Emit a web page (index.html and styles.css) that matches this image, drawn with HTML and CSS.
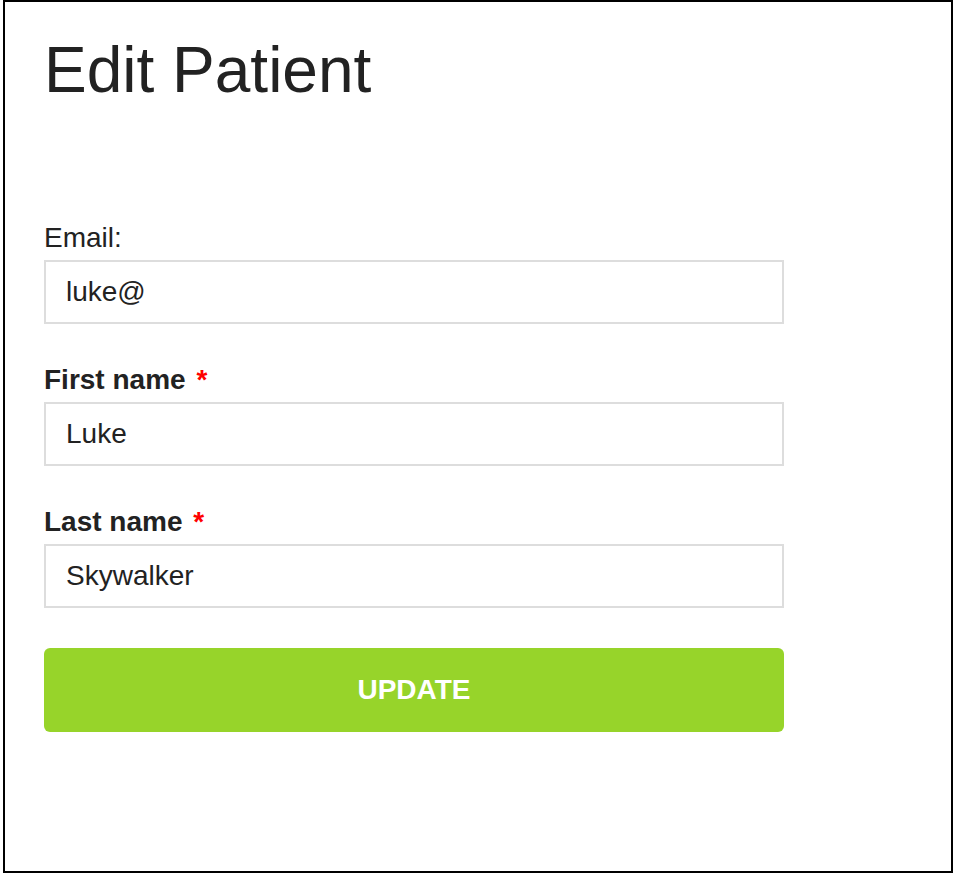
FILE: index.html
```html
<!DOCTYPE html>
<html lang="en">
<head>
<meta charset="utf-8">
<title>Edit Patient</title>
<link rel="stylesheet" href="styles.css">
</head>
<body>
<div class="frame">
  <h1 class="title">Edit Patient</h1>
  <form class="form">
    <div class="field">
      <label class="label" for="email">Email:</label>
      <input class="input" id="email" type="text" value="luke@">
    </div>
    <div class="field">
      <label class="label label-strong" for="first">First name <span class="req">*</span></label>
      <input class="input" id="first" type="text" value="Luke">
    </div>
    <div class="field">
      <label class="label label-strong" for="last">Last name <span class="req">*</span></label>
      <input class="input" id="last" type="text" value="Skywalker">
    </div>
    <button class="btn" type="button">UPDATE</button>
  </form>
</div>
</body>
</html>
```

FILE: styles.css
```css
html, body {
  margin: 0;
  padding: 0;
  background: #fff;
}

body {
  font-family: "Liberation Sans", Arial, Helvetica, sans-serif;
  color: #222;
}

.frame {
  box-sizing: border-box;
  width: 950px;
  height: 873px;
  margin-left: 3px;
  border: 2px solid #000;
  padding: 36px 0 0 39px;
}

.title {
  margin: 0;
  font-size: 64px;
  line-height: 64px;
  font-weight: 400;
  color: #222;
}

.form {
  margin-top: 121px;
  width: 740px;
  display: flex;
  flex-direction: column;
  gap: 41px;
}

.field {
  display: flex;
  flex-direction: column;
}

.label {
  font-size: 28px;
  line-height: 30px;
  margin-bottom: 7px;
  color: #222;
}

.label-strong {
  font-weight: 700;
}

.req {
  color: #f00;
  margin-left: 3px;
}

.input {
  box-sizing: border-box;
  width: 740px;
  height: 64px;
  margin: 0;
  border: 2px solid #ddd;
  border-radius: 0;
  padding: 0 20px;
  font-family: "Liberation Sans", Arial, Helvetica, sans-serif;
  font-size: 28px;
  color: #222;
  background: #fff;
  outline: none;
}

.btn {
  box-sizing: border-box;
  width: 740px;
  height: 84px;
  margin-top: -1px;
  border: 0;
  border-radius: 6px;
  background: #97d42a;
  color: #fff;
  font-family: "Liberation Sans", Arial, Helvetica, sans-serif;
  font-size: 28px;
  font-weight: 700;
  cursor: pointer;
}
```
